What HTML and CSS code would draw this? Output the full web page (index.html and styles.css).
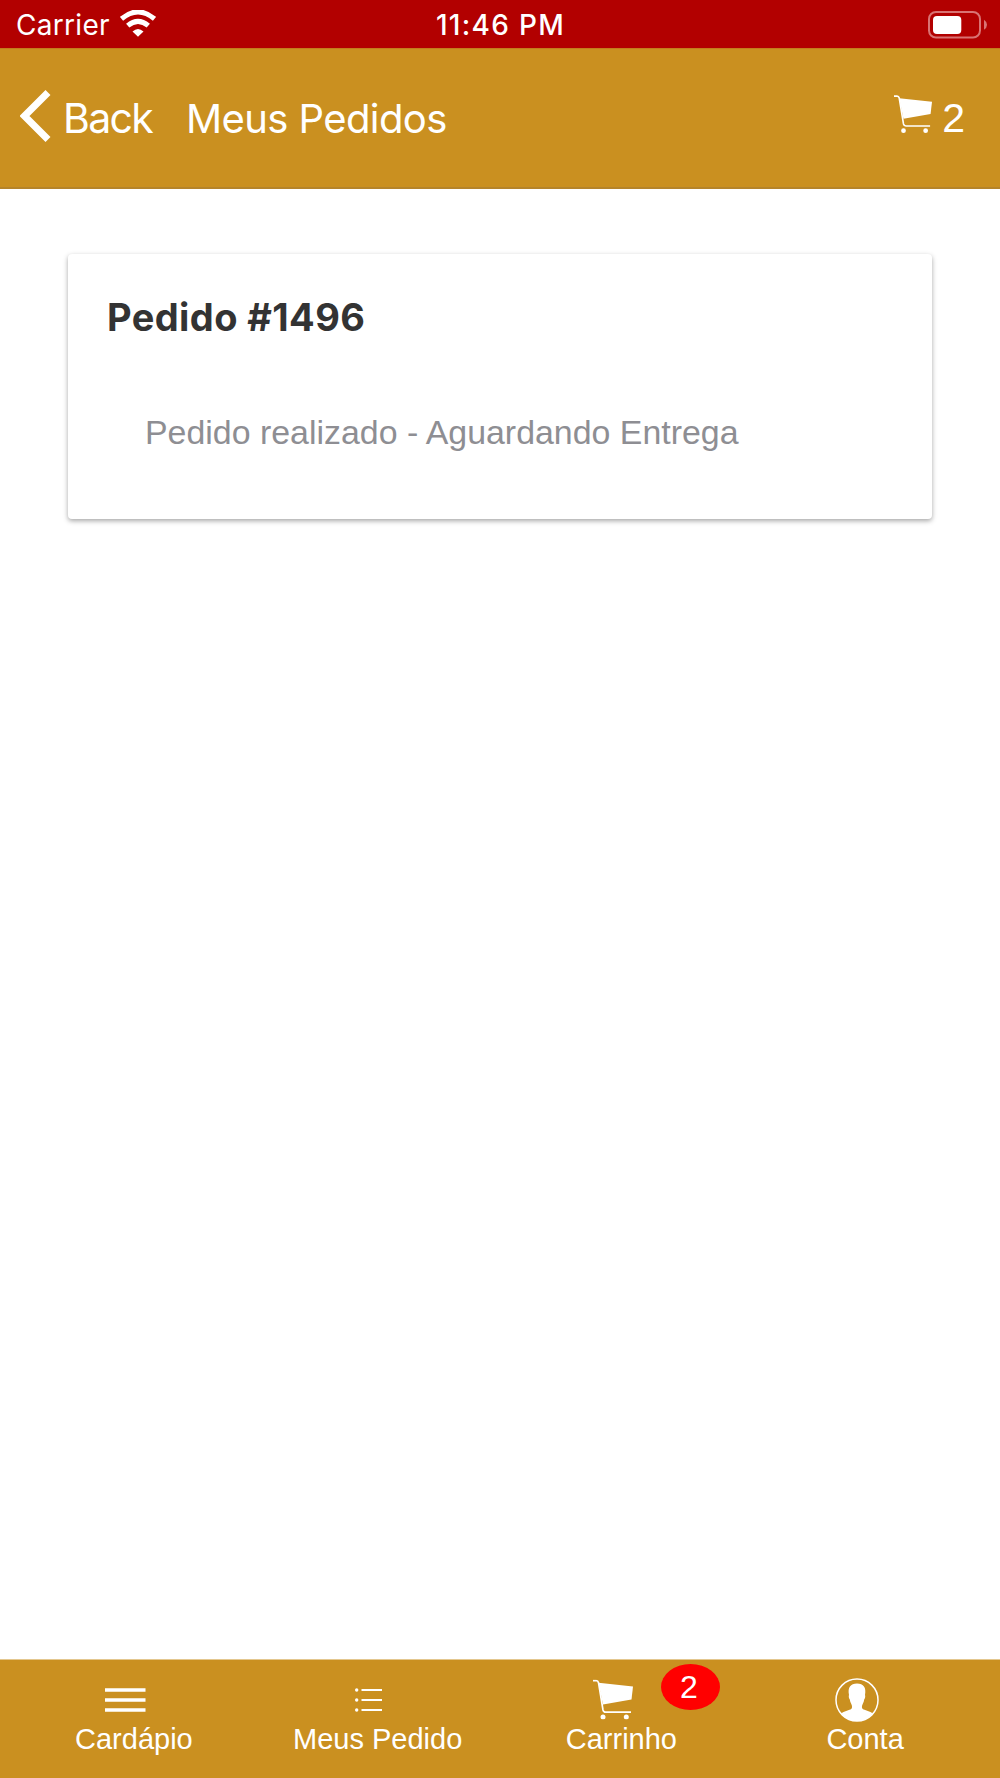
FILE: index.html
```html
<!DOCTYPE html>
<html lang="pt-BR">
<head>
    <meta charset="UTF-8">
    <meta name="viewport" content="width=device-width, initial-scale=1.0">
    <title>Meus Pedidos</title>
    <link rel="stylesheet" href="styles.css">
</head>
<body>
<svg class="symbols">
    <symbol id="cart" viewBox="0 0 40 40">
        <path d="M0 1.200h3.200c1.400 0 2 .8 2.300 2L10 30.500c.4 1.500 1.200 2.200 2.600 2.200H38" fill="none" stroke="currentColor" stroke-width="1.700"/>
        <path d="M5.500 3.300L40 7l-1.500 13L10 25z" fill="currentColor"/>
        <circle cx="10" cy="37.500" r="2.500" fill="currentColor"/>
        <circle cx="33.300" cy="37.500" r="2.500" fill="currentColor"/>
    </symbol>
</svg>
<div class="status-bar">
    <div class="carrier">
        <span class="carrier-name">Carrier</span>
        <svg class="wifi" viewBox="0 0 36 27">
            <path d="M1.500 8.800Q18-5 34.500 8.800M7.700 15.700Q18 7 28.300 15.700" fill="none" stroke="#fff" stroke-width="5"/>
            <path d="M12.500 21.500Q18 16.500 23.500 21.500L18 26.800z" fill="#fff"/>
        </svg>
    </div>
    <span class="time">11:46 PM</span>
    <svg class="battery" viewBox="0 0 60 28">
        <rect x="1" y="1" width="51" height="25.500" rx="7" fill="none" stroke="#d97373" stroke-width="2"/>
        <rect x="5" y="5" width="28.300" height="18" rx="4" fill="#fff"/>
        <path d="M56 8.700q3 2 3 5t-3 5z" fill="#d97373"/>
    </svg>
</div>
<header class="header">
    <a class="back" href="#">
        <svg class="back-icon" viewBox="0 0 31 52">
            <path d="M28 2.500L4.500 26L28 49.500" fill="none" stroke="#fff" stroke-width="7"/>
        </svg>
        <span class="back-text">Back</span>
    </a>
    <h1 class="title">Meus Pedidos</h1>
    <a class="header-cart" href="#">
        <svg class="header-cart-icon"><use href="#cart"/></svg>
        <span class="header-count">2</span>
    </a>
</header>
<main class="content">
    <div class="card">
        <h2 class="order-number">Pedido #1496</h2>
        <p class="order-status">Pedido realizado - Aguardando Entrega</p>
    </div>
</main>
<nav class="tabs">
    <a class="tab" href="#">
        <svg class="tab-icon" viewBox="0 0 44 44">
            <path d="M2 12h40.500M2 22h40.500M2 32h40.500" stroke="#fff" stroke-width="3.600"/>
        </svg>
        <span class="tab-label">Cardápio</span>
    </a>
    <a class="tab" href="#">
        <svg class="tab-icon" viewBox="0 0 44 44">
            <path d="M14.500 12H35M14.500 22H35M14.500 32H35" stroke="#fff" stroke-width="2"/>
            <circle cx="9.700" cy="12" r="1.700" fill="#fff"/>
            <circle cx="9.700" cy="22" r="1.700" fill="#fff"/>
            <circle cx="9.700" cy="32" r="1.700" fill="#fff"/>
        </svg>
        <span class="tab-label">Meus Pedido</span>
    </a>
    <a class="tab" href="#">
        <svg class="tab-icon" viewBox="0 0 44 44"><use href="#cart" x="2" y="1.500" width="40" height="40"/></svg>
        <span class="tab-label">Carrinho</span>
        <span class="badge">2</span>
    </a>
    <a class="tab" href="#">
        <svg class="tab-icon" viewBox="0 0 44 44">
            <circle cx="22" cy="22" r="21" fill="none" stroke="#fff" stroke-width="1.500"/>
            <path d="M6 35.500c3-2.300 7.500-3 10-4.200 1.500-1 1.300-3.300.3-5.300-.8-1.500-1.400-3-1.500-4.500-1-1-1.300-3.300-.8-4.500C12.500 9.500 15.500 5.500 22 5.500S31.500 9.500 30 17c.5 1.200.2 3.500-.8 4.500-.1 1.500-.7 3-1.500 4.500-1 2-1.200 4.300.3 5.300 2.500 1.200 7 1.900 10 4.200C34 40.500 28.500 43 22 43S10 40.500 6 35.500z" fill="#fff"/>
        </svg>
        <span class="tab-label">Conta</span>
    </a>
</nav>
</body>
</html>
```
FILE: styles.css
```css
* {
    box-sizing: border-box;
}
body {
    margin: 0;
    height: 1778px;
    display: flex;
    flex-direction: column;
    background-color: #fff;
    color: #fff;
    font-family: Inter, sans-serif;
}
a {
    color: #fff;
    text-decoration: none;
}
.symbols {
    display: none;
}
.status-bar {
    display: grid;
    grid-template-columns: 1fr auto 1fr;
    height: 48px;
    padding: 0 12px 0 16px;
    background-color: #b20000;
    line-height: 51px;
}
.carrier {
    display: flex;
    gap: 10px;
}
.carrier-name {
    font-size: 28px;
    letter-spacing: 0.3px;
}
.wifi {
    width: 36px;
    height: 27px;
    margin-top: 10px;
}
.time {
    padding-right: 3px;
    font-size: 28px;
    font-weight: 500;
    letter-spacing: 1.3px;
}
.battery {
    width: 60px;
    height: 28px;
    margin-top: 11px;
    justify-self: end;
}
.header {
    display: flex;
    align-items: center;
    height: 141px;
    padding: 0 35px 0 20px;
    background-color: #ca9020;
    border-top: 1px solid #c47c1c;
    border-bottom: 2px solid #b5842a;
}
.back {
    display: flex;
    align-items: center;
    gap: 12px;
}
.back-icon {
    width: 31px;
    height: 52px;
    margin-bottom: 5px;
}
.back-text {
    font-size: 41px;
    letter-spacing: -1.7px;
}
.title {
    margin: 0 0 0 34px;
    font-size: 40px;
    font-weight: 400;
    letter-spacing: -0.6px;
}
.header-cart {
    display: flex;
    margin-left: auto;
}
.header-cart-icon {
    width: 38px;
    height: 38px;
    margin-right: 10px;
}
.header-count {
    font-family: "Liberation Sans", sans-serif;
    font-size: 41px;
}
.content {
    flex: 1;
    padding: 65px 68px;
}
.card {
    height: 265px;
    padding: 39px 39px;
    background-color: #fff;
    border-radius: 4px;
    box-shadow: 0 2px 5px rgba(0, 0, 0, 0.35);
}
.order-number {
    margin: 0;
    color: #333;
    font-size: 38px;
    line-height: 48px;
    letter-spacing: 0.4px;
}
.order-status {
    margin: 71px 0 0 38px;
    color: #8e8e93;
    font-family: "Liberation Sans", sans-serif;
    font-size: 33.9px;
    line-height: 40px;
}
.tabs {
    display: grid;
    grid-template-columns: repeat(4, 1fr);
    height: 119px;
    padding: 0 13px 0 12px;
    background-color: #ca9020;
    border-top: 1px solid #e4c78f;
    font-family: "Liberation Sans", sans-serif;
}
.tab {
    position: relative;
    display: flex;
    flex-direction: column;
    align-items: center;
    padding-top: 18px;
}
.tab-icon {
    width: 44px;
    height: 44px;
    margin-right: 17px;
}
.tab-label {
    font-size: 29px;
    line-height: 34px;
}
.badge {
    position: absolute;
    top: 4px;
    left: 161px;
    width: 59px;
    height: 46px;
    padding-right: 2px;
    border-radius: 50%;
    background-color: #f00;
    font-size: 32px;
    line-height: 46px;
    text-align: center;
}
```
